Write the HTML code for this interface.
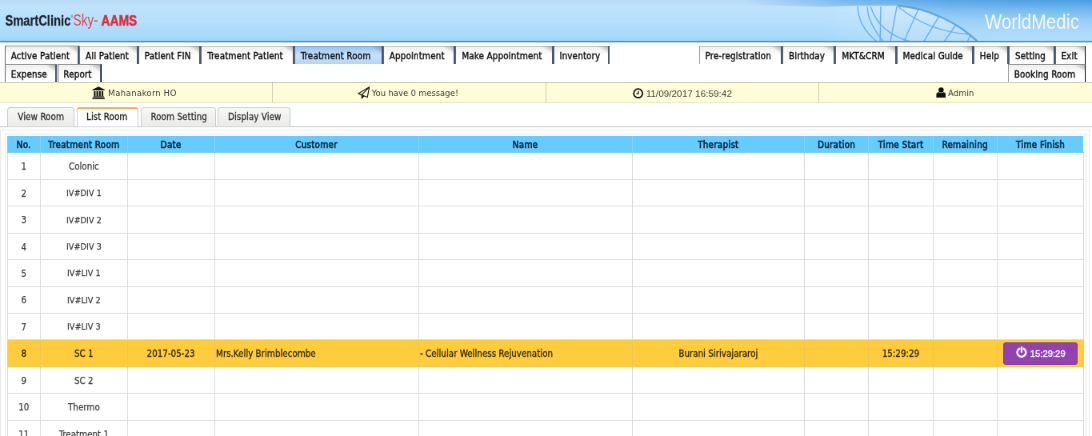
<!DOCTYPE html>
<html>
<head>
<meta charset="utf-8">
<title>SmartClinic Sky - AAMS</title>
<style>
html,body{margin:0;padding:0;background:#fff;overflow:hidden;}
body{width:1092px;height:436px;position:relative;}
#app{position:absolute;left:0;top:0;width:1365px;height:545px;transform:scale(0.8);transform-origin:0 0;will-change:transform;
 font-family:"DejaVu Sans Condensed","Liberation Sans",sans-serif;font-size:11.3px;color:#333;overflow:hidden;}
#hdr{position:absolute;left:0;top:0;width:1365px;height:53.2px;overflow:hidden;}
#hdr svg{position:absolute;left:0;top:0;}
.tb{position:absolute;box-sizing:border-box;height:23px;line-height:24.4px;padding:0 0 0 6.8px;font-size:11.6px;color:#111;white-space:nowrap;overflow:hidden;
 border-top:1px solid #8c8c8c;border-left:1.3px solid #666;border-right:2.2px solid #44597a;
 background:linear-gradient(#efefef,#ffffff 55%);letter-spacing:.12px;-webkit-text-stroke:.4px #111;}
.tb.fl{border-left:1px solid #999;}
.tb.act{background:linear-gradient(#94c1f4,#c9e2fb 50%,#b4d6f9);}
.tb:after{content:"";position:absolute;right:0;top:0;width:13px;height:9px;background:linear-gradient(to bottom left,rgba(110,110,110,.5),rgba(200,200,200,0) 55%);}
#status{position:absolute;left:0;top:102.4px;width:1365px;height:26.6px;background:#fffdd8;display:flex;border-top:1.2px solid #7d8a84;border-bottom:1px solid #e4e2c8;box-sizing:border-box;}
#status div{flex:none;width:341.25px;box-sizing:border-box;text-align:center;line-height:28.4px;font-size:11.3px;color:#3a3a3a;border-right:1px solid #cfccb0;white-space:nowrap;}
#status div:last-child{border-right:0;}
#status svg{vertical-align:-4.2px;}
#status .dt{font-family:"Liberation Sans","DejaVu Sans",sans-serif;font-size:11.8px;}
.st{position:absolute;top:134.2px;box-sizing:border-box;height:23.6px;line-height:22px;padding:0 0 0 11.6px;font-size:11.5px;color:#333;border:1px solid #c6ccd2;border-right:1.6px solid #c3cad1;border-bottom:0;border-radius:4px 4px 0 0;background:linear-gradient(#f8f8f6,#ebebe9);white-space:nowrap;-webkit-text-stroke:.3px #333;letter-spacing:.06px;}
.st.act{background:#fff;border-top:2px solid #f2a83c;color:#111;line-height:21px;}
#subline{position:absolute;left:0;top:157.7px;width:1365px;height:1.2px;background:#babfc3;}
#panel{position:absolute;left:0px;top:161.5px;width:1362.2px;height:400px;border:1px solid #e9e9e9;box-sizing:border-box;}
#inner{position:absolute;left:5.6px;top:166.6px;width:1352.6px;height:400px;border:1px solid #eeeae6;box-sizing:border-box;}
table{position:absolute;left:8.75px;top:170.3px;width:1345px;border-collapse:collapse;table-layout:fixed;}
th{height:18.6px;padding-top:1.5px !important;background:#66ccff;font-size:11.5px;color:#0c2740;font-weight:normal;padding:0;border-right:1px solid #86d4fc;border-bottom:1px solid #66ccff;letter-spacing:.28px;-webkit-text-stroke:.6px #0c2740;}
td{height:31.25px;border:1px solid #dbdbdb;border-left:0;padding:1.2px 0 0 0;text-align:center;font-size:11.5px;color:#3c3c3c;white-space:nowrap;-webkit-text-stroke:.25px #444;}
td:first-child{border-left:1px solid #dbdbdb;}
td.l{text-align:left;padding-left:1.5px;}
td.c{font-size:10.8px;}
tr.hl td.b{padding-top:0;height:32.45px;}
tr.hl td{background:#ffcc3e;border-color:#ffcc3e;border-right-color:#f2c654;color:#30260a;-webkit-text-stroke:.3px #3a2e08;}
.btn{display:inline-block;box-sizing:border-box;width:93px;height:28px;padding-top:1.3px;line-height:25.4px;background:#9042b3;border:1px solid #78339a;position:relative;left:.7px;border-radius:3px;color:#fff;font-weight:normal;-webkit-text-stroke:.35px #fff;font-size:11.3px;vertical-align:middle;font-family:"Liberation Sans","DejaVu Sans",sans-serif;}
.pw{vertical-align:-0.9px;margin-right:3.6px;}
</style>
</head>
<body>
<div id="app">
 <div id="hdr">
  <svg width="1365" height="54" viewBox="0 0 1365 54">
   <defs>
    <linearGradient id="g1" x1="0" y1="0" x2="0" y2="1"><stop offset="0" stop-color="#b8dcf7"/><stop offset=".15" stop-color="#c0e3fb"/><stop offset=".5" stop-color="#b6e0fc"/><stop offset=".85" stop-color="#a7dafb"/><stop offset="1" stop-color="#9dd3f8"/></linearGradient>
    <linearGradient id="g2" x1="0" y1="0" x2="0" y2="1"><stop offset="0" stop-color="#4a9ce4"/><stop offset=".2" stop-color="#6eb6ee"/><stop offset=".45" stop-color="#96cdf5"/><stop offset=".75" stop-color="#aedafa"/><stop offset="1" stop-color="#b4ddfb"/></linearGradient>
    <linearGradient id="fade" gradientUnits="userSpaceOnUse" x1="930" y1="0" x2="1365" y2="0"><stop offset="0" stop-color="#fff" stop-opacity="0"/><stop offset=".3" stop-color="#fff" stop-opacity=".6"/><stop offset=".6" stop-color="#fff" stop-opacity=".88"/><stop offset="1" stop-color="#fff" stop-opacity="1"/></linearGradient>
    <mask id="mk"><path d="M930,0 L1365,0 L1365,54 L1224,54 C1200,30 1160,9 1121.7,7.2 Q1080,6.6 1030,8.5 Q980,8 930,5 Z" fill="url(#fade)"/></mask>
    <linearGradient id="glf" gradientUnits="userSpaceOnUse" x1="1030" y1="0" x2="1120" y2="0"><stop offset="0" stop-color="#fff" stop-opacity="0"/><stop offset="1" stop-color="#fff" stop-opacity="1"/></linearGradient>
    <mask id="mg"><rect x="1030" y="0" width="220" height="54" fill="url(#glf)"/></mask>
    <linearGradient id="g3" x1="0" y1="0" x2="0" y2="1"><stop offset="0" stop-color="#5aa7e8"/><stop offset="1" stop-color="#5aa7e8" stop-opacity="0"/></linearGradient>
    <linearGradient id="gl" x1="0" y1="0" x2="0" y2="1"><stop offset="0" stop-color="#d3ebfd"/><stop offset="1" stop-color="#b9defa"/></linearGradient>
    <clipPath id="gc"><path d="M1030,54 L1030,9 Q1080,6.6 1121.7,7.2 C1160,9 1200,30 1224,54 Z"/></clipPath>
   </defs>
   <rect width="1365" height="54" fill="url(#g1)"/>
   <rect x="900" width="465" height="54" fill="url(#g2)" mask="url(#mk)"/>
   <path d="M1030,54 L1030,9 Q1080,6.6 1121.7,7.2 C1160,9 1200,30 1224,54 Z" fill="url(#gl)" opacity=".8" mask="url(#mg)"/>
   <g clip-path="url(#gc)" fill="none" stroke="#5ca8ea" stroke-width="1.5" opacity=".8">
    <path d="M1101,8 L1100.1,52"/><path d="M1121,8 L1113,52"/><path d="M1148.2,11 L1129.7,52"/><path d="M1174.6,19 L1154.6,52"/><path d="M1195.5,30 L1180.2,52"/><path d="M1214,42 L1209.1,52"/>
    <path d="M1072.1,8 Q1072.9,33.6 1096.1,52"/><path d="M1084.1,8 Q1083.9,27.1 1104.1,52"/><path d="M1088.1,8 Q1099,41.6 1137.9,52"/>
    <path d="M1123.4,9 Q1161.75,40.1 1213.1,43"/>
   </g>
   <path d="M1121.7,7.2 C1160,9 1200,30 1224,54" fill="none" stroke="#56a2e6" stroke-width="2.4" opacity=".9"/>
   <rect y="46" width="1365" height="5" fill="url(#g3)" opacity=".0"/>
   <rect y="51.1" width="1365" height="2.1" fill="#4a92cf"/>
   <text x="6.4" y="32" font-family="Liberation Sans, sans-serif" font-weight="bold" font-size="19" fill="#1d2530" stroke="#1d2530" stroke-width=".3" textLength="82" lengthAdjust="spacingAndGlyphs">SmartClinic</text>
   <text x="88.3" y="22.5" font-family="Liberation Sans, sans-serif" font-size="4.5" fill="#555">®</text>
   <text x="91.6" y="32" font-family="Liberation Sans, sans-serif" font-size="20" fill="#e2434f" textLength="30.8" lengthAdjust="spacingAndGlyphs">Sky-</text>
   <text x="126.4" y="32" font-family="Liberation Sans, sans-serif" font-weight="bold" font-size="18" fill="#dc2f3f" stroke="#dc2f3f" stroke-width=".6" textLength="44.9" lengthAdjust="spacingAndGlyphs">AAMS</text>
   <text x="1231" y="36.2" font-family="Liberation Sans, sans-serif" font-size="25.5" fill="#fff" opacity=".88" textLength="118" lengthAdjust="spacingAndGlyphs">WorldMedic</text>
  </svg>
 </div>

  <div class="tb" style="left:5.88px;top:57.4px;width:93.38px">Active Patient</div>
  <div class="tb" style="left:99.25px;top:57.4px;width:73.75px">All Patient</div>
  <div class="tb" style="left:173.00px;top:57.4px;width:78.38px">Patient FIN</div>
  <div class="tb" style="left:251.38px;top:57.4px;width:116.75px">Treatment Patient</div>
  <div class="tb act" style="left:368.12px;top:57.4px;width:110.75px">Treatment Room</div>
  <div class="tb" style="left:478.88px;top:57.4px;width:90.50px">Appointment</div>
  <div class="tb" style="left:569.38px;top:57.4px;width:122.25px">Make Appointment</div>
  <div class="tb" style="left:691.62px;top:57.4px;width:70.12px">Inventory</div>
  <div class="tb" style="left:5.88px;top:80.4px;width:65.62px">Expense</div>
  <div class="tb" style="left:71.50px;top:80.4px;width:55.38px">Report</div>
  <div class="tb fl" style="left:873.75px;top:57.4px;width:104.38px">Pre-registration</div>
  <div class="tb" style="left:978.12px;top:57.4px;width:66.25px">Birthday</div>
  <div class="tb" style="left:1044.38px;top:57.4px;width:76.25px">MKT&amp;CRM</div>
  <div class="tb" style="left:1120.62px;top:57.4px;width:96.38px">Medical Guide</div>
  <div class="tb" style="left:1217.00px;top:57.4px;width:44.12px">Help</div>
  <div class="tb" style="left:1261.12px;top:57.4px;width:57.50px">Setting</div>
  <div class="tb" style="left:1318.62px;top:57.4px;width:39.12px">Exit</div>
  <div class="tb fl" style="left:1260.00px;top:80.4px;width:97.75px">Booking Room</div>

 <div id="status">
  <div style="padding-right:4.2px"><svg width="16.4" height="16" viewBox="0 0 16 16" style="margin-right:3.6px;vertical-align:-4px"><path d="M8 0.2 L15.7 3.9 V5.1 H0.3 V3.9 Z M2.1 5.9 H4.3 V11.9 H2.1 Z M5.3 5.9 H7.5 V11.9 H5.3 Z M8.5 5.9 H10.7 V11.9 H8.5 Z M11.7 5.9 H13.9 V11.9 H11.7 Z M1.3 12.3 H14.7 V13.6 H1.3 Z M0.3 14 H15.7 V15.8 H0.3 Z" fill="#1a1a14"/></svg><span style="letter-spacing:.35px">Mahanakorn HO</span></div>
  <div style="padding-right:2.8px"><svg width="15.5" height="15.5" viewBox="0 0 16 16" style="margin-right:2.4px;vertical-align:-3.5px"><path d="M15.2 0.8 L0.9 9.2 L5.2 11 L5.6 15.3 L8.1 12.2 L12.6 14 Z M15.2 0.8 L5.2 11" fill="none" stroke="#1a1a14" stroke-width="1.25" stroke-linejoin="round"/><path d="M5.2 11 L5.6 15.3 L8.3 12 L7.2 10.6 Z" fill="#1a1a14"/></svg>You have 0 message!</div>
  <div style="padding-left:1px"><svg width="13.4" height="13.4" viewBox="0 0 14 14" style="margin-right:3px;vertical-align:-1.8px"><circle cx="7" cy="7" r="5.8" fill="none" stroke="#111" stroke-width="1.9"/><path d="M7.3 3.8 V7.4 H4.6" fill="none" stroke="#111" stroke-width="1.3"/></svg><span class="dt">11/09/2017 16:59:42</span></div>
  <div style="padding-right:1.6px"><svg width="12.8" height="13" viewBox="0 0 13 13" style="margin-right:2.6px;vertical-align:-2px"><circle cx="6.5" cy="3.4" r="3.3" fill="#111"/><path d="M0.4 12.9 V9.6 Q0.4 6.6 3.4 6.3 Q6.5 8 9.6 6.3 Q12.6 6.6 12.6 9.6 V12.9 Q12.6 13 12 13 H1 Q0.4 13 0.4 12.9 Z" fill="#111"/></svg>Admin</div>
 </div>

  <div class="st" style="left:8.88px;width:83.88px;padding-left:12.4px">View Room</div>
  <div class="st act" style="left:95.50px;width:77.87px">List Room</div>
  <div class="st" style="left:175.88px;width:93.75px">Room Setting</div>
  <div class="st" style="left:272.38px;width:90.62px">Display View</div>
 <div id="subline"></div>
 <div id="panel"></div><div id="inner"></div>

 <table>
  <colgroup><col style="width:41.25px"><col style="width:108.75px"><col style="width:108.75px"><col style="width:255px"><col style="width:267.25px"><col style="width:215.15px"><col style="width:80.35px"><col style="width:80.35px"><col style="width:80.3px"><col style="width:107.85px"></colgroup>
  <tr><th>No.</th><th>Treatment Room</th><th>Date</th><th>Customer</th><th>Name</th><th>Therapist</th><th>Duration</th><th>Time Start</th><th>Remaining</th><th style="border-right:0">Time Finish</th></tr>
  <tr><td>1</td><td>Colonic</td><td></td><td></td><td></td><td></td><td></td><td></td><td></td><td></td></tr>
  <tr><td>2</td><td class="c">IV#DIV 1</td><td></td><td></td><td></td><td></td><td></td><td></td><td></td><td></td></tr>
  <tr><td>3</td><td class="c">IV#DIV 2</td><td></td><td></td><td></td><td></td><td></td><td></td><td></td><td></td></tr>
  <tr><td>4</td><td class="c">IV#DIV 3</td><td></td><td></td><td></td><td></td><td></td><td></td><td></td><td></td></tr>
  <tr><td>5</td><td class="c">IV#LIV 1</td><td></td><td></td><td></td><td></td><td></td><td></td><td></td><td></td></tr>
  <tr><td>6</td><td class="c">IV#LIV 2</td><td></td><td></td><td></td><td></td><td></td><td></td><td></td><td></td></tr>
  <tr><td>7</td><td class="c">IV#LIV 3</td><td></td><td></td><td></td><td></td><td></td><td></td><td></td><td></td></tr>
  <tr class="hl"><td>8</td><td>SC 1</td><td>2017-05-23</td><td class="l">Mrs.Kelly Brimblecombe</td><td class="l">- Cellular Wellness Rejuvenation</td><td>Burani Sirivajararoj</td><td></td><td>15:29:29</td><td></td><td class="b"><span class="btn"><svg class="pw" viewBox="0 0 12 12" width="13.8" height="13.8"><path d="M3.5 2.5 A4.7 4.7 0 1 0 8.5 2.5" fill="none" stroke="#fff" stroke-width="2.1" stroke-linecap="round"/><path d="M6 0.9 V5.8" stroke="#fff" stroke-width="2.1" stroke-linecap="round"/></svg>15:29:29</span></td></tr>
  <tr><td>9</td><td>SC 2</td><td></td><td></td><td></td><td></td><td></td><td></td><td></td><td></td></tr>
  <tr><td>10</td><td>Thermo</td><td></td><td></td><td></td><td></td><td></td><td></td><td></td><td></td></tr>
  <tr><td>11</td><td>Treatment 1</td><td></td><td></td><td></td><td></td><td></td><td></td><td></td><td></td></tr>
  <tr><td>12</td><td>Treatment 2</td><td></td><td></td><td></td><td></td><td></td><td></td><td></td><td></td></tr>
 </table>
</div>
</body>
</html>
